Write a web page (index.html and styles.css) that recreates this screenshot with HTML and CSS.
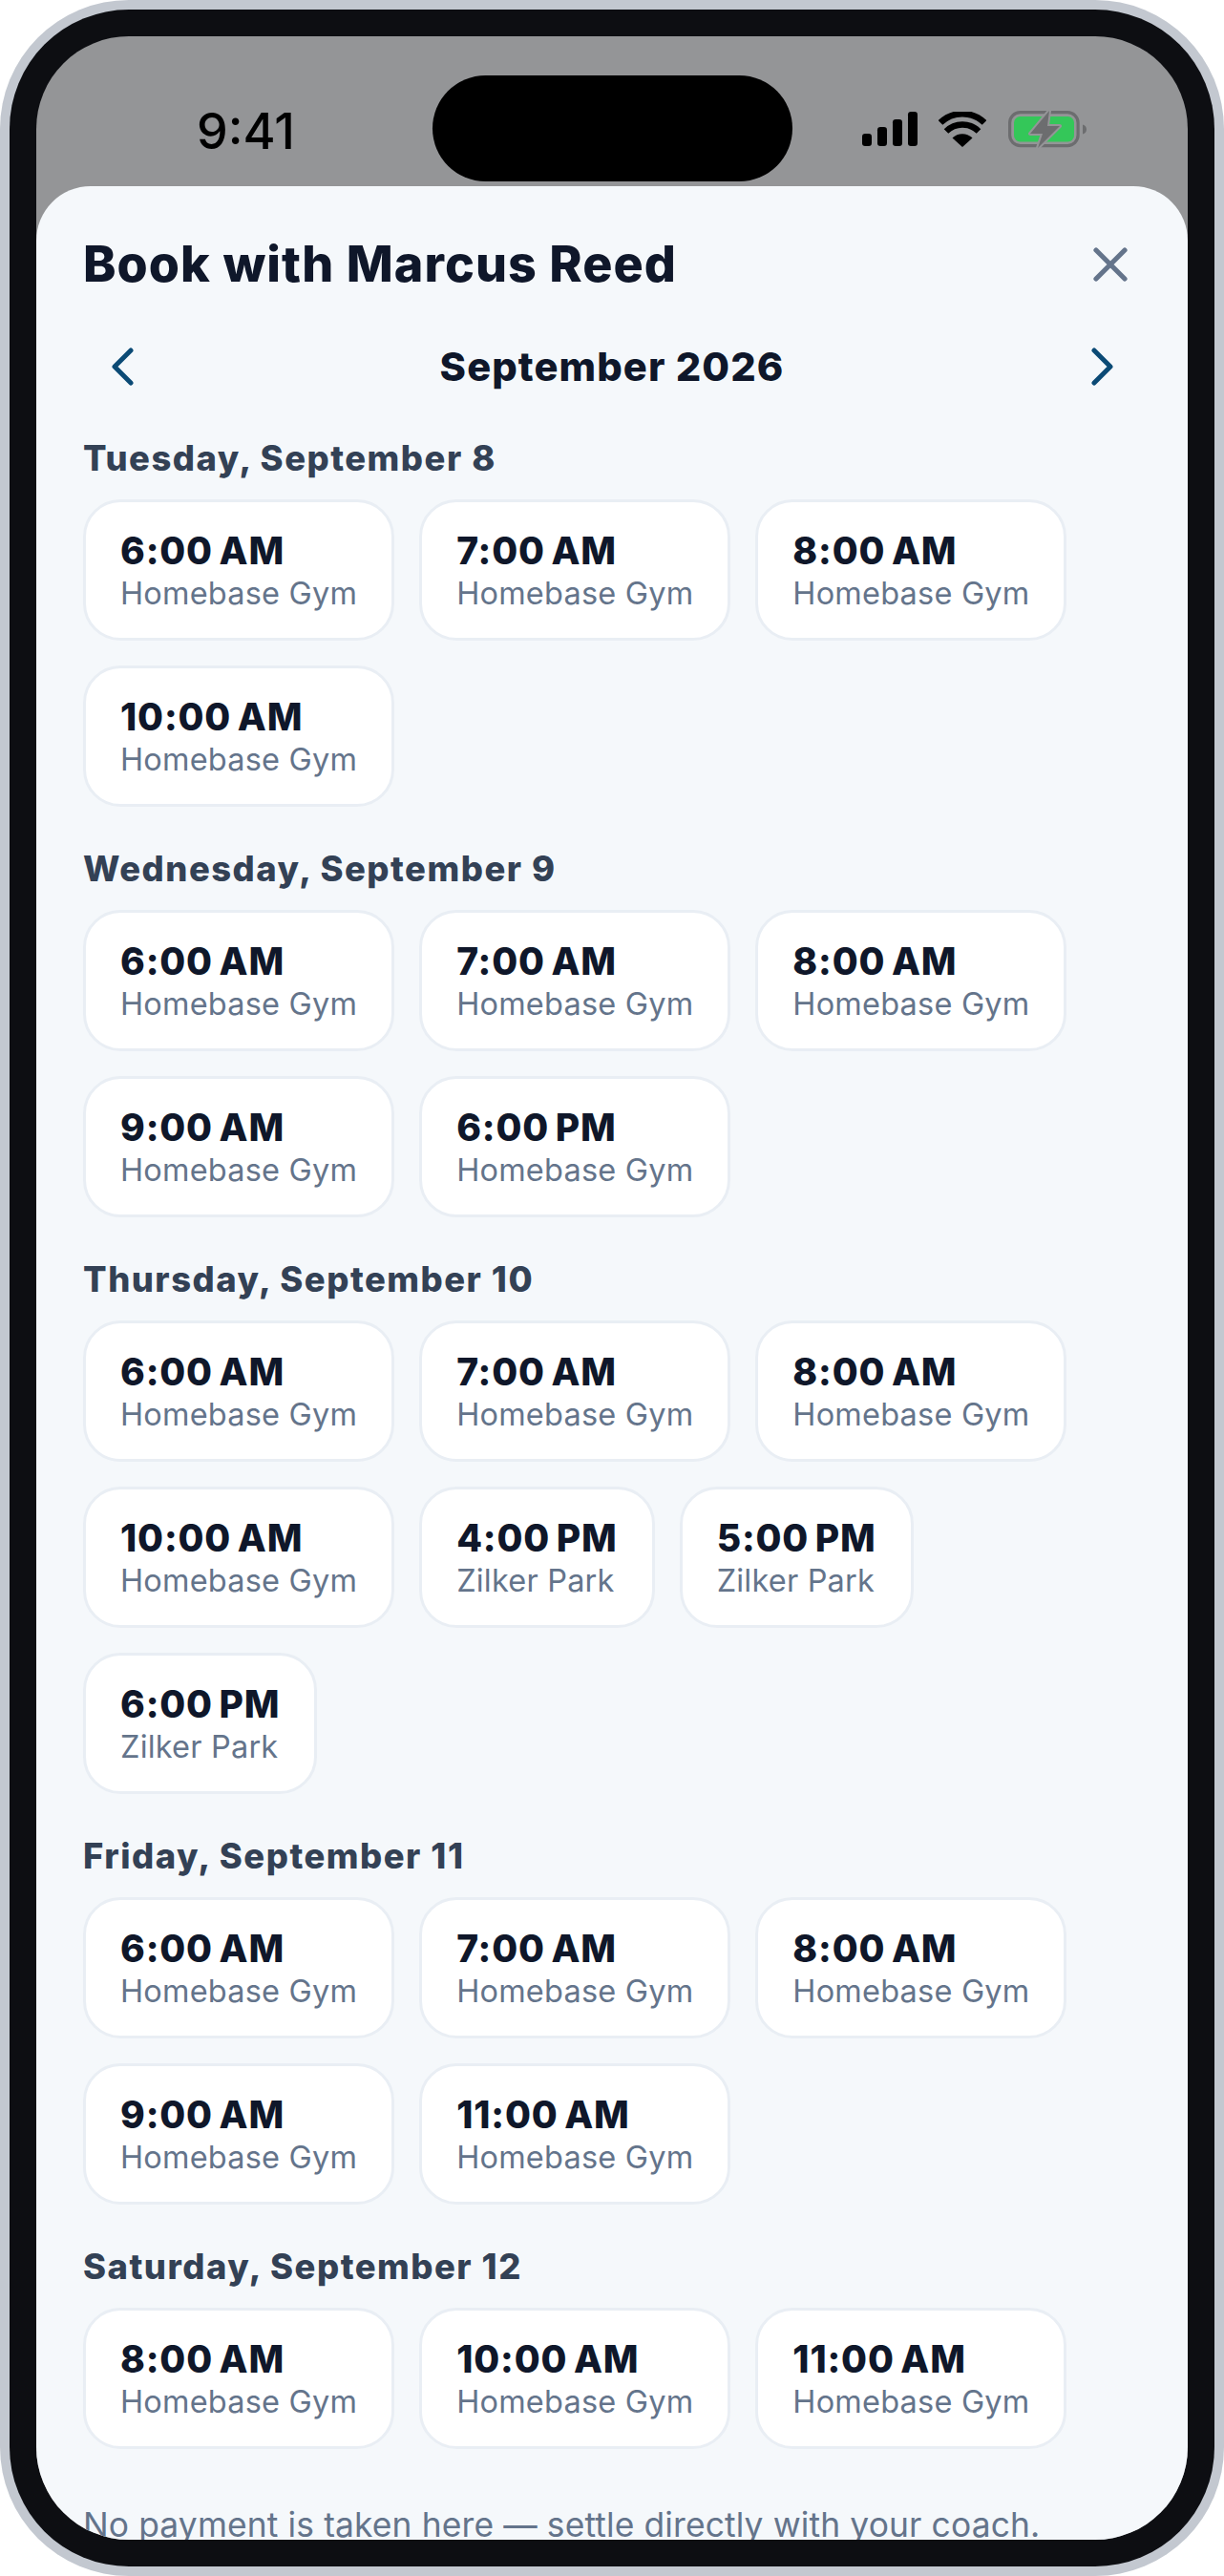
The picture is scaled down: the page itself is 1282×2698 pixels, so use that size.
FILE: index.html
```html
<!DOCTYPE html>
<html lang="en">
<head>
<meta charset="utf-8">
<title>Book with Marcus Reed</title>
<link rel="stylesheet" href="styles.css">
</head>
<body>
<div class="phone">
  <div class="bezel">
  <div class="screen">
    <div class="status">
      <span class="clock">9:41</span>
      <div class="island"></div>
      <div class="indicators">
        <svg class="signal" width="58" height="36" viewBox="0 0 58 36"><rect x="0" y="23" width="10" height="13" rx="3.2"/><rect x="16" y="16" width="10" height="20" rx="3.2"/><rect x="32" y="8" width="10" height="28" rx="3.2"/><rect x="48" y="0" width="10" height="36" rx="3.2"/></svg>
        <svg class="wifi" width="50" height="37" viewBox="0 0 50 37"><path d="M25 37 14.5 27.5a15 15 0 0 1 21 0Z" fill="#000"/><path d="M8 20.5a24 24 0 0 1 34 0" fill="none" stroke="#000" stroke-width="6.4"/><path d="M2 11.5a33 33 0 0 1 46 0" fill="none" stroke="#000" stroke-width="6.6"/></svg>
        <svg class="battery" width="82" height="40" viewBox="0 0 82 40"><rect x="1.6" y="1.6" width="71.5" height="35" rx="11" fill="none" stroke="#6c6d6f" stroke-width="3.2"/><rect x="6" y="6" width="63" height="26.5" rx="6.5" fill="#34c759"/><path d="M78 14.500c2.500.8 4 2.500 4 5s-1.500 4.200-4 5Z" fill="#6c6d6f"/><path d="M43 0 23 24h13l-5 15 23-23H41Z" fill="#6c6d6f" stroke="#949597" stroke-width="4" stroke-linejoin="round" paint-order="stroke"/></svg>
      </div>
    </div>
    <main class="sheet">
      <header class="title-row">
        <h1 class="title">Book with Marcus Reed</h1>
        <svg class="close" width="36" height="36" viewBox="0 0 36 36"><path d="M3 3 33 33M33 3 3 33" fill="none" stroke="#64748b" stroke-width="5.2" stroke-linecap="round"/></svg>
      </header>
      <nav class="month-nav">
        <span class="nav-btn"><svg width="23" height="40" viewBox="0 0 23 40"><path d="M20 3 3 20 20 37" fill="none" stroke="#0b4a75" stroke-width="5" stroke-linecap="round" stroke-linejoin="round"/></svg></span>
        <span class="month">September 2026</span>
        <span class="nav-btn"><svg width="23" height="40" viewBox="0 0 23 40"><path d="M3 3 20 20 3 37" fill="none" stroke="#0b4a75" stroke-width="5" stroke-linecap="round" stroke-linejoin="round"/></svg></span>
      </nav>

      <section class="day">
        <h2 class="day-name">Tuesday, September 8</h2>
        <div class="slots">
          <div class="slot"><div class="time">6:00&#8239;AM</div><div class="place">Homebase Gym</div></div>
          <div class="slot"><div class="time">7:00&#8239;AM</div><div class="place">Homebase Gym</div></div>
          <div class="slot"><div class="time">8:00&#8239;AM</div><div class="place">Homebase Gym</div></div>
          <div class="slot"><div class="time">10:00&#8239;AM</div><div class="place">Homebase Gym</div></div>
        </div>
      </section>

      <section class="day">
        <h2 class="day-name">Wednesday, September 9</h2>
        <div class="slots">
          <div class="slot"><div class="time">6:00&#8239;AM</div><div class="place">Homebase Gym</div></div>
          <div class="slot"><div class="time">7:00&#8239;AM</div><div class="place">Homebase Gym</div></div>
          <div class="slot"><div class="time">8:00&#8239;AM</div><div class="place">Homebase Gym</div></div>
          <div class="slot"><div class="time">9:00&#8239;AM</div><div class="place">Homebase Gym</div></div>
          <div class="slot"><div class="time">6:00&#8239;PM</div><div class="place">Homebase Gym</div></div>
        </div>
      </section>

      <section class="day">
        <h2 class="day-name">Thursday, September 10</h2>
        <div class="slots">
          <div class="slot"><div class="time">6:00&#8239;AM</div><div class="place">Homebase Gym</div></div>
          <div class="slot"><div class="time">7:00&#8239;AM</div><div class="place">Homebase Gym</div></div>
          <div class="slot"><div class="time">8:00&#8239;AM</div><div class="place">Homebase Gym</div></div>
          <div class="slot"><div class="time">10:00&#8239;AM</div><div class="place">Homebase Gym</div></div>
          <div class="slot"><div class="time">4:00&#8239;PM</div><div class="place">Zilker Park</div></div>
          <div class="slot"><div class="time">5:00&#8239;PM</div><div class="place">Zilker Park</div></div>
          <div class="slot"><div class="time">6:00&#8239;PM</div><div class="place">Zilker Park</div></div>
        </div>
      </section>

      <section class="day">
        <h2 class="day-name">Friday, September 11</h2>
        <div class="slots">
          <div class="slot"><div class="time">6:00&#8239;AM</div><div class="place">Homebase Gym</div></div>
          <div class="slot"><div class="time">7:00&#8239;AM</div><div class="place">Homebase Gym</div></div>
          <div class="slot"><div class="time">8:00&#8239;AM</div><div class="place">Homebase Gym</div></div>
          <div class="slot"><div class="time">9:00&#8239;AM</div><div class="place">Homebase Gym</div></div>
          <div class="slot"><div class="time">11:00&#8239;AM</div><div class="place">Homebase Gym</div></div>
        </div>
      </section>

      <section class="day">
        <h2 class="day-name">Saturday, September 12</h2>
        <div class="slots">
          <div class="slot"><div class="time">8:00&#8239;AM</div><div class="place">Homebase Gym</div></div>
          <div class="slot"><div class="time">10:00&#8239;AM</div><div class="place">Homebase Gym</div></div>
          <div class="slot"><div class="time">11:00&#8239;AM</div><div class="place">Homebase Gym</div></div>
        </div>
      </section>

      <p class="note">No payment is taken here — settle directly with your coach.</p>
    </main>
  </div>
  </div>
</div>
</body>
</html>
```
FILE: styles.css
```css
* { box-sizing: border-box; }
html, body { margin: 0; padding: 0; background: #fff; }
body { font-family: Inter, "Liberation Sans", sans-serif; }

.phone {
  width: 1282px;
  height: 2698px;
  padding: 10px;
  border-radius: 135px;
  background: #c3c8d0;
}
.bezel {
  height: 2678px;
  padding: 28px;
  border-radius: 125px;
  background: #0d0e12;
}
.screen {
  position: relative;
  height: 2622px;
  overflow: hidden;
  border-radius: 97px;
  background: #949597;
}

.status { height: 157px; padding-left: 168px; }
.clock {
  display: block;
  padding-top: 69px;
  font-size: 52px;
  line-height: 62px;
  font-weight: 500;
  color: #000;
}
.island {
  position: absolute;
  left: 414.5px;
  top: 41px;
  width: 377px;
  height: 111px;
  border-radius: 55.5px;
  background: #000;
}
.indicators {
  position: absolute;
  left: 865px;
  top: 78px;
  display: flex;
  align-items: flex-start;
}
.signal { margin-top: 1px; }
.wifi { margin: 1px 0 0 22px; }
.battery { margin-left: 23px; }

.sheet {
  height: 2465px;
  overflow: hidden;
  padding: 50px 49px 0;
  background: #f5f8fb;
  border-radius: 57px 57px 0 0;
}
.title-row {
  display: flex;
  align-items: center;
  justify-content: space-between;
  padding-right: 14px;
}
.title {
  margin: 0;
  font-size: 52px;
  line-height: 63px;
  font-weight: 800;
  letter-spacing: 1.05px;
  color: #0f172a;
}
.month-nav {
  height: 64px;
  margin-top: 44px;
  display: flex;
  align-items: center;
  justify-content: space-between;
}
.nav-btn {
  width: 82px;
  display: flex;
  justify-content: center;
}
.month {
  font-size: 41.6px;
  line-height: 50px;
  font-weight: 800;
  letter-spacing: 1.1px;
  color: #0f172a;
}
.day { margin-top: 42px; }
.day + .day { margin-top: 43.2px; }
.day-name {
  margin: 0 0 20.8px;
  font-size: 36.4px;
  line-height: 44px;
  font-weight: 800;
  letter-spacing: 1.5px;
  color: #334155;
}
.slots {
  display: flex;
  flex-wrap: wrap;
  gap: 26px;
}
.slot {
  padding: 27.5px 36px 25.5px;
  background: #fff;
  border: 3px solid #e9eef4;
  border-radius: 39px;
}
.time {
  font-size: 39px;
  line-height: 47px;
  font-weight: 800;
  letter-spacing: 0.85px;
  color: #0f172a;
}
.place {
  margin-top: 1px;
  font-size: 32.5px;
  line-height: 41px;
  letter-spacing: 0.2px;
  color: #64748b;
}
.note {
  margin: 59px 0 0;
  font-size: 35.4px;
  line-height: 41px;
  letter-spacing: 0.13px;
  color: #64748b;
}
```
